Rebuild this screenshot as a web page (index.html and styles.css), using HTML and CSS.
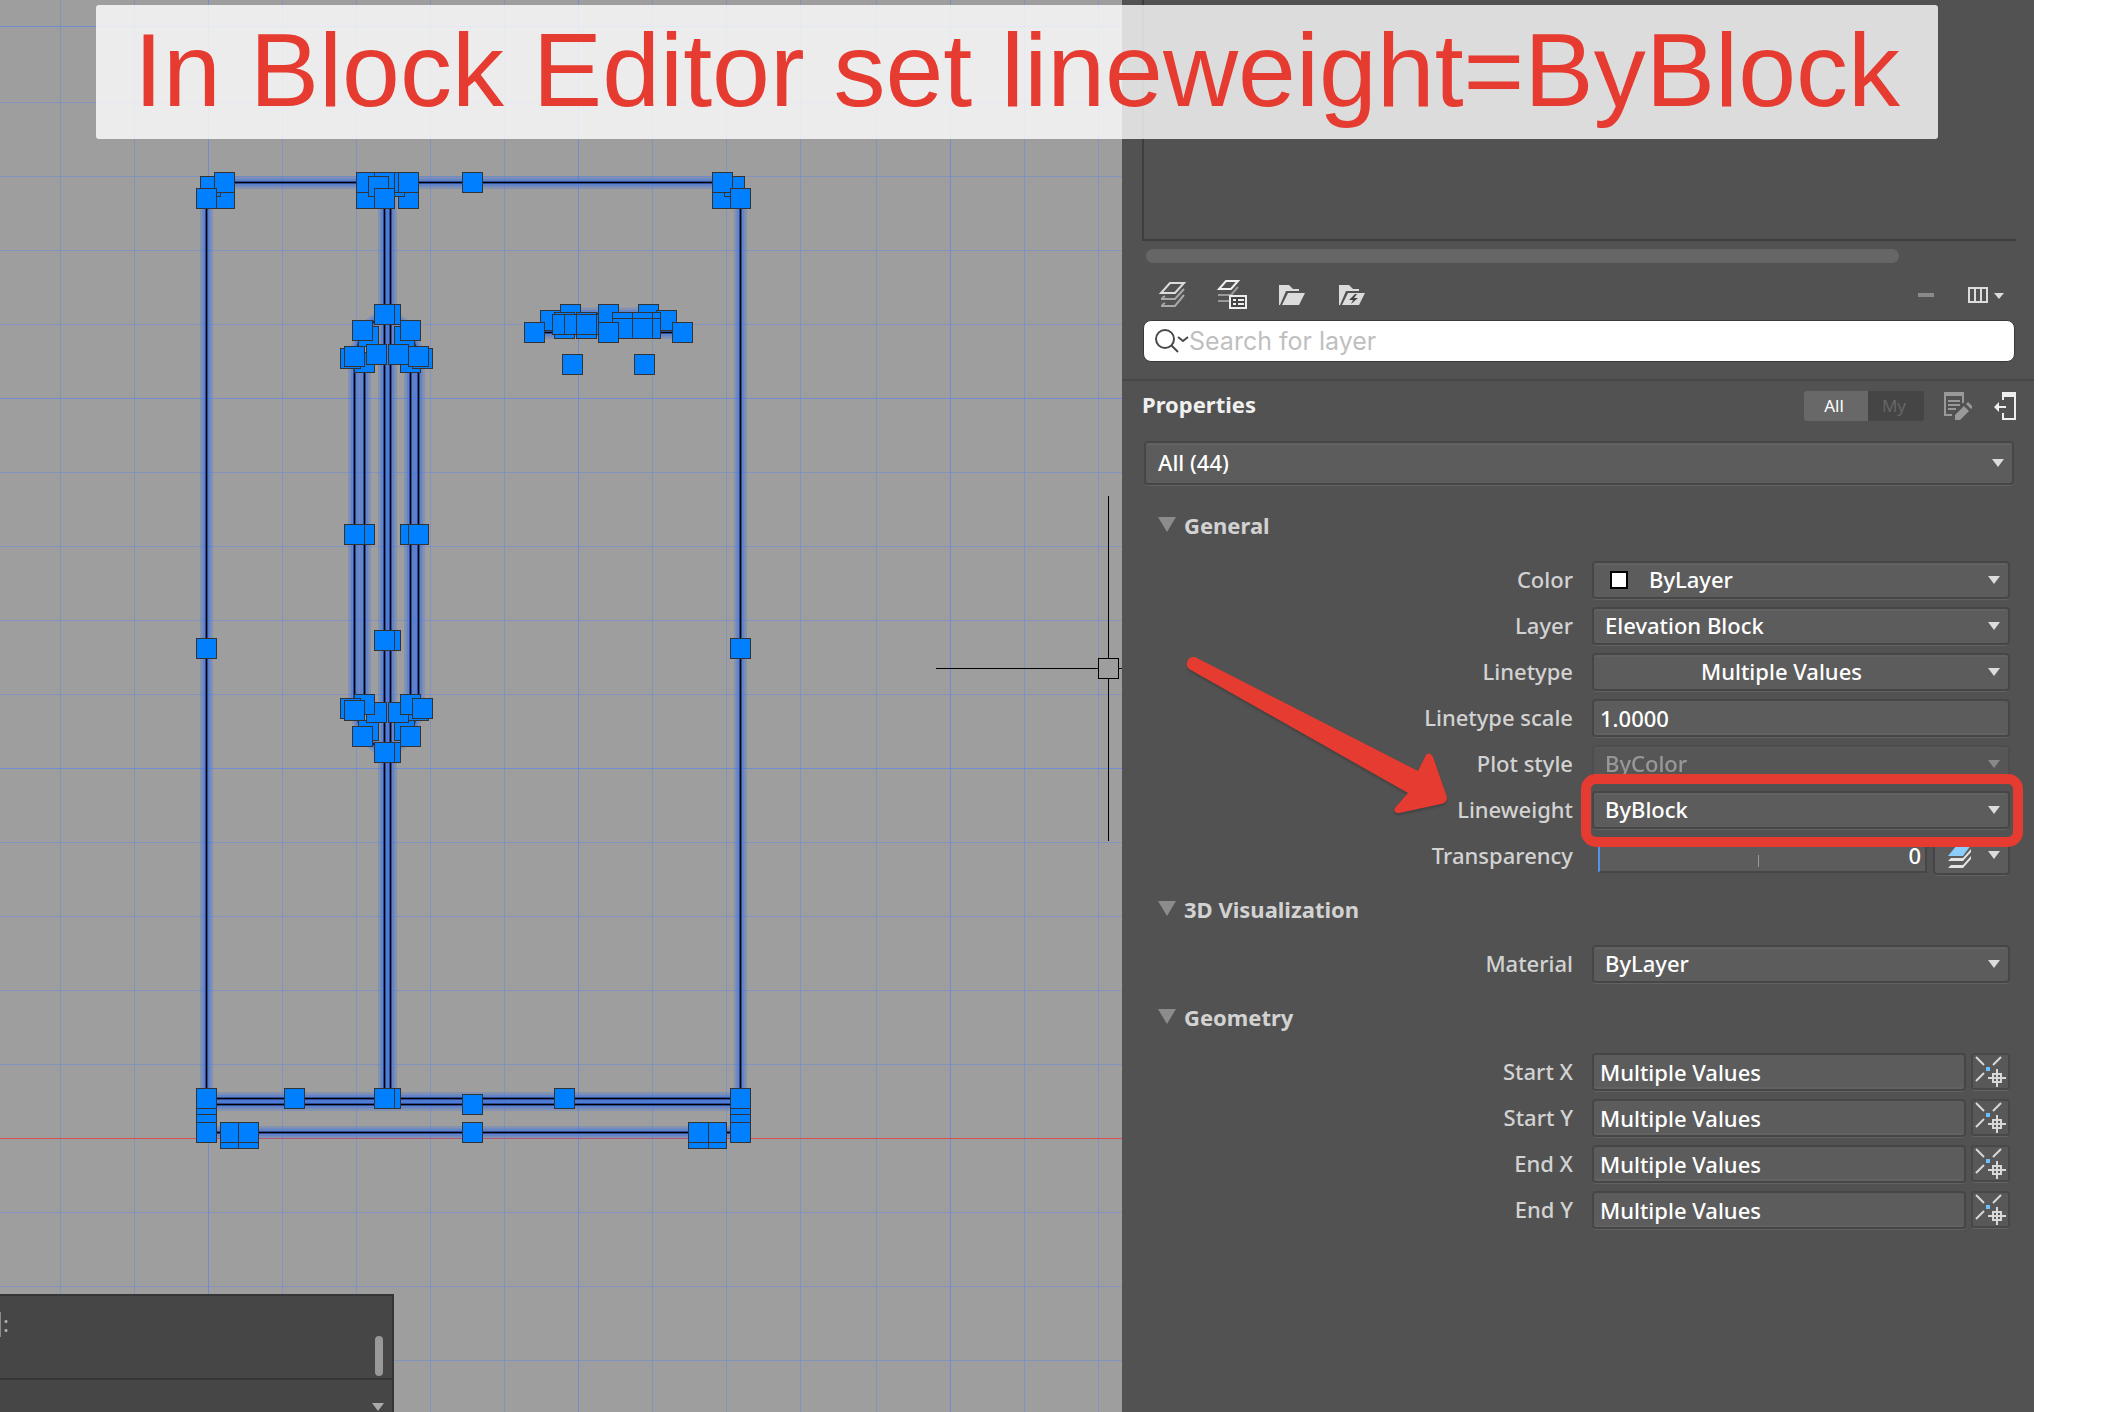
FILE: index.html
```
<!DOCTYPE html>
<html lang="en">
<head>
<meta charset="utf-8">
<title>Block Editor – Properties</title>
<link rel="stylesheet" href="styles.css">
</head>
<body>
<svg class="defs" aria-hidden="true">
  <symbol id="pick" viewBox="0 0 32 32">
    <path d="M1 1l8 8M26 1l-8 8M1 25l8-8" stroke="#d8d8d8" stroke-width="2" fill="none"/>
    <rect x="11" y="11" width="4" height="4" fill="#6cc0ff"/>
    <path d="M22 13v18M13 22h18M18 18h8v8h-8z" stroke="#d8d8d8" stroke-width="2" fill="none"/>
  </symbol>
</svg>

<main class="app">
  <section class="canvas" aria-label="Drawing area">
    <svg class="drawing" id="drawing" aria-hidden="true"></svg>
    <div class="command">
      <div class="history"><span class="prompt">:</span><span class="thumb"></span></div>
      <div class="entry"><span class="caret"></span></div>
    </div>
  </section>

  <aside class="panel">
    <div class="layer-list"></div>
    <div class="hscroll"></div>

    <div class="toolbar">
      <button class="tool" aria-label="Layers"><svg width="32" height="32" viewBox="0 0 32 32" fill="none" stroke-width="2">
        <path d="M14 4h14l-9 10H5z" stroke="#dcdcdc"/>
        <path d="M5 20h14l9-10M5 27h14l9-11M6 19l3-2M6 26l3-2" stroke="#a8a8a8"/></svg></button>
      <button class="tool" aria-label="Layer states"><svg width="32" height="32" viewBox="0 0 32 32" fill="none" stroke-width="2">
        <path d="M10 2h12l-7 8H3z" stroke="#f0f0f0"/>
        <path d="M2 16h13l7-8M2 22h12" stroke="#999"/>
        <path d="M14 17h16v12H14z" stroke="#eee" fill="#444"/><path d="M17 21h3M22 21h6M17 25h3M22 25h6" stroke="#eee"/></svg></button>
      <button class="tool" aria-label="New group"><svg width="32" height="32" viewBox="0 0 32 32">
        <path d="M3 6h10l4 4h6v2H10L4 26H3z" fill="#dcdcdc"/><path d="M12 14h17l-6 12H6z" fill="#dcdcdc"/></svg></button>
      <button class="tool" aria-label="New dynamic group"><svg width="32" height="32" viewBox="0 0 32 32">
        <path d="M3 6h10l4 4h6v2H10L4 26H3z" fill="#dcdcdc"/><path d="M12 14h17l-6 12H6z" fill="#dcdcdc"/><path d="M19 15l-6 6h4l-2 4 7-6h-4l3-4z" fill="#444"/></svg></button>
      <span class="spacer"></span>
      <button class="tool minus" aria-label="Remove"><svg width="16" height="4"><rect width="16" height="4" fill="#8a8a8a"/></svg></button>
      <button class="tool columns" aria-label="Columns"><svg width="36" height="16" viewBox="0 0 36 16">
        <path d="M1 1h18v14H1zM7 1v14M13 1v14" fill="none" stroke="#dcdcdc" stroke-width="2"/><path d="M26 6h10l-5 6z" fill="#dcdcdc"/></svg></button>
    </div>

    <label class="search">
      <svg width="34" height="26" viewBox="0 0 34 26" fill="none" stroke="#4a4a4a" stroke-width="2" aria-hidden="true">
        <circle cx="10" cy="11" r="9"/><path d="M16 17l7 7"/><path d="M23 9l5 4 5-4"/></svg>
      <input type="search" placeholder="Search for layer" aria-label="Search for layer">
    </label>

    <header class="heading">
      <h1>Properties</h1>
      <div class="segments"><button class="on">All</button><button disabled>My</button></div>
      <button class="tool" aria-label="Edit list"><svg width="28" height="28" viewBox="0 0 28 28">
        <path d="M1 2h18v9M1 2v21h7" fill="none" stroke="#999" stroke-width="2"/><path d="M0 0h20v4H0zM4 8h12v2H4zM4 12h12v2H4zM4 16h8v2H4z" fill="#999"/>
        <path d="M20 14l5 5-9 9h-5v-5zM22 12l2-2 5 5-2 2z" fill="#999"/></svg></button>
      <button class="tool" aria-label="Dock panel"><svg width="22" height="28" viewBox="0 0 22 28">
        <path d="M9 8V2h12v25H9v-6" fill="none" stroke="#eee" stroke-width="2"/><path d="M8 0h14v5H8z" fill="#eee"/><path d="M0 15l5-5v4h7v2H5v4z" fill="#eee"/></svg></button>
    </header>

    <div class="selection"><select class="field" aria-label="Selection"><option>All (44)</option></select></div>

    <section>
      <h2>General</h2>
      <div class="row"><label for="color">Color</label><div class="swatched"><select class="field" id="color"><option>ByLayer</option></select><span class="swatch"></span></div></div>
      <div class="row"><label for="layer">Layer</label><select class="field" id="layer"><option>Elevation Block</option></select></div>
      <div class="row"><label for="linetype">Linetype</label><select class="field centered" id="linetype"><option>Multiple Values</option></select></div>
      <div class="row"><label for="scale">Linetype scale</label><input class="field" id="scale" value="1.0000"></div>
      <div class="row"><label for="plot">Plot style</label><select class="field" id="plot" disabled><option>ByColor</option></select></div>
      <div class="row marked"><label for="weight">Lineweight</label><select class="field" id="weight"><option>ByBlock</option></select>
        <svg class="arrow" width="264" height="164" viewBox="0 0 264 164" aria-hidden="true"><path d="M3 8Q4 1 11 2L234 116 242 100Q246 96 249 102L263 142Q263 148 257 149L215 158Q209 158 211 153L224 138 5 14Q2 11 3 8z"/></svg>
      </div>
      <div class="row"><label for="transparency">Transparency</label>
        <div class="split"><div class="slider"><input id="transparency" value="0"><span class="tick"></span></div>
          <button class="field bylayer" aria-label="Transparency source"><svg width="24" height="28" viewBox="0 0 24 28">
            <path d="M9 4h14l-8 11H0z" fill="#8ccdfb"/><path d="M0 20l3-3h12l8-9v3l-8 9zM0 27l3-3h12l8-9v3l-8 9z" fill="#e4e4e4"/></svg></button></div></div>
    </section>

    <section>
      <h2>3D Visualization</h2>
      <div class="row"><label for="material">Material</label><select class="field" id="material"><option>ByLayer</option></select></div>
    </section>

    <section>
      <h2>Geometry</h2>
      <div class="row"><label for="sx">Start X</label><div class="point"><input class="field" id="sx" value="Multiple Values"><button class="pick" aria-label="Pick start X"><svg width="32" height="32"><use href="#pick"/></svg></button></div></div>
      <div class="row"><label for="sy">Start Y</label><div class="point"><input class="field" id="sy" value="Multiple Values"><button class="pick" aria-label="Pick start Y"><svg width="32" height="32"><use href="#pick"/></svg></button></div></div>
      <div class="row"><label for="ex">End X</label><div class="point"><input class="field" id="ex" value="Multiple Values"><button class="pick" aria-label="Pick end X"><svg width="32" height="32"><use href="#pick"/></svg></button></div></div>
      <div class="row"><label for="ey">End Y</label><div class="point"><input class="field" id="ey" value="Multiple Values"><button class="pick" aria-label="Pick end Y"><svg width="32" height="32"><use href="#pick"/></svg></button></div></div>
    </section>
  </aside>

  <p class="banner">In Block Editor set lineweight=ByBlock</p>
</main>
<script src="script.js"></script>
</body>
</html>
```
FILE: styles.css
```
* { box-sizing: border-box; }
body {
  margin: 0;
  background: #fff;
  font-family: "Noto Sans", "Open Sans", sans-serif;
  font-size: 22px;
  color: #fff;
}
button, input, select { font: inherit; color: inherit; }
button { padding: 0; border: 0; background: none; }
svg { display: block; }
.defs { position: absolute; width: 0; height: 0; }

.app {
  position: relative;
  display: grid;
  grid-template-columns: minmax(0, 1fr) 912px;
  min-height: 100vh;
  padding-right: 78px;
}

/* Drawing area */
.canvas {
  position: relative;
  display: flex;
  flex-direction: column;
  justify-content: flex-end;
  overflow: hidden;
  background: #9e9e9e;
}
.drawing { position: absolute; inset: 0; width: 100%; height: 100%; }
.grid { stroke: #5b82e6; stroke-opacity: .4; }
.grid.major { stroke-opacity: .65; }
.axis { stroke: #d9504e; }
.glow-a { stroke: #3f74e4; stroke-opacity: .28; stroke-width: 13; fill: none; }
.glow-b { stroke: #3f74e4; stroke-opacity: .45; stroke-width: 8; fill: none; }
.glow-c { stroke: #16357e; stroke-opacity: .7; stroke-width: 3; fill: none; }
.line { stroke: #000; stroke-width: 1; fill: none; }
.grip { fill: #0080ff; stroke: #333; }

.command {
  position: relative;
  width: 394px;
  background: #464646;
  border: 2px solid #353535;
  border-width: 2px 2px 0 0;
}
.history {
  display: flex;
  justify-content: space-between;
  height: 84px;
  padding: 16px 9px 0 0;
  border-bottom: 2px solid #353535;
}
.prompt {
  height: 25px;
  padding-left: 2px;
  border-left: 1px solid #8a8a8a;
  line-height: 23px;
  color: #b0b0b0;
}
.thumb { width: 8px; height: 40px; margin-top: 24px; border-radius: 4px; background: #999; }
.entry { display: flex; justify-content: flex-end; height: 32px; padding: 23px 8px 0 0; }
.caret { width: 12px; height: 8px; background: #aaa; clip-path: polygon(0 0, 100% 0, 50% 100%); }

/* Panel */
.panel { background: #525252; }
.layer-list {
  height: 241px;
  margin: 0 18px 0 20px;
  border-left: 2px solid #3e3e3e;
  border-bottom: 2px solid #3e3e3e;
}
.hscroll { height: 14px; margin: 8px 135px 0 24px; border-radius: 7px; background: #666; }
.toolbar {
  display: flex;
  align-items: center;
  gap: 28px;
  height: 56px;
  padding: 8px 30px 0 34px;
}
.spacer { flex: 1; }
.columns { margin-left: 6px; }
.search {
  display: flex;
  align-items: center;
  height: 42px;
  margin: 1px 19px 0 21px;
  padding: 0 11px;
  border: 1px solid #3a3a3a;
  border-radius: 8px;
  background: #fff;
}
.search input {
  flex: 1;
  padding: 0;
  border: 0;
  outline: 0;
  background: none;
  color: #333;
  font: 25px/38px Inter, sans-serif;
}
.search input::placeholder { color: #bfbfbf; opacity: 1; }

.heading {
  display: flex;
  align-items: center;
  height: 60px;
  margin-top: 17px;
  padding: 0 18px 12px 20px;
  border-top: 2px solid #474747;
}
.heading h1 { flex: 1; margin: 0; font-size: 22px; font-weight: 700; line-height: 30px; color: #f0f0f0; }
.segments { display: flex; margin-top: 4px; margin-right: 20px; border-radius: 3px; overflow: hidden; font-size: 17px; }
.segments button { width: 56px; height: 30px; padding: 0 4px 2px 0; background: #454545; color: #666; }
.segments .on { width: 64px; background: #686868; color: #fff; }
.heading .tool { margin-top: 4px; }
.heading .tool + .tool { margin-left: 22px; }

.selection { padding: 0 20px 0 22px; margin-top: 2px; }
.selection .field { height: 44px; padding-left: 12px; }

.field {
  width: 100%;
  height: 38px;
  padding: 0 8px 3px 11px;
  border: 2px solid #464646;
  border-radius: 4px;
  outline: 0;
  font-weight: 500;
  box-shadow: 0 2px 0 -1px #626262, inset 0 2px 0 #626262;
  appearance: none;
  background: #5c5c5c;
}
select.field {
  background-image: url("data:image/svg+xml,%3Csvg xmlns='http://www.w3.org/2000/svg' width='12' height='8'%3E%3Cpath d='M0 0h12l-6 8z' fill='%23dcdcdc'/%3E%3C/svg%3E");
  background-repeat: no-repeat;
  background-position: right 8px center;
}
input.field { padding: 0 6px; box-shadow: 0 2px 0 -1px #626262, inset 0 -2px 0 #626262; }
select:disabled { opacity: .4; }
.centered { padding-right: 50px; text-align: center; text-align-last: center; }

section > h2 {
  display: flex;
  align-items: center;
  gap: 8px;
  height: 62px;
  margin: 0;
  padding: 0 0 3px 36px;
  font-size: 22px;
  font-weight: 700;
  color: #d2d2d2;
}
h2::before {
  content: "";
  width: 18px;
  height: 15px;
  background: #8c8c8c;
  clip-path: polygon(0 0, 100% 0, 50% 100%);
}
.selection + section > h2 { margin-top: 10px; }

.row {
  display: grid;
  grid-template-columns: minmax(0, 1fr) 418px;
  column-gap: 19px;
  align-items: center;
  height: 46px;
  padding: 0 24px 0 20px;
}
.row > label { padding-bottom: 3px; text-align: right; font-weight: 500; color: #d2d2d2; }
.swatched { position: relative; }
.swatched .field { padding-left: 55px; }
.swatch {
  position: absolute;
  left: 18px;
  top: 10px;
  width: 18px;
  height: 18px;
  border: 2px solid #000;
  background: #fff;
}
.point { display: grid; grid-template-columns: minmax(0, 1fr) 39px; column-gap: 5px; }
.pick {
  height: 37px;
  padding: 1px 0 0 4px;
  border-radius: 3px;
  background: #585858;
  box-shadow: inset 0 0 0 2px #484848, 0 2px 0 -1px #646464;
}

.split { display: flex; gap: 6px; padding-left: 6px; }
.slider { position: relative; flex: 1; }
.slider input {
  width: 100%;
  height: 36px;
  padding: 0 4px;
  border: 2px solid #464646;
  border-left: 2px solid #5591e8;
  outline: 0;
  background: #5c5c5c;
  text-align: right;
  font-weight: 500;
}
.tick { position: absolute; left: 160px; bottom: 8px; width: 1px; height: 12px; background: #999; }
.bylayer {
  display: flex;
  align-items: center;
  width: 77px;
  padding: 0 8px 2px 13px;
  justify-content: space-between;
}
.bylayer::after {
  content: "";
  width: 12px;
  height: 8px;
  background: #dcdcdc;
  clip-path: polygon(0 0, 100% 0, 50% 100%);
}

/* Call-outs drawn over the panel */
.marked { position: relative; z-index: 1; }
.marked::after {
  content: "";
  position: absolute;
  inset: -13px 11px -14px 459px;
  border: 10px solid #e53b30;
  border-radius: 15px;
  pointer-events: none;
}
.arrow { position: absolute; left: 62px; top: -132px; fill: #e53b30; filter: drop-shadow(0 2px 1px #3338); }
.banner {
  position: absolute;
  left: 96px;
  right: 174px;
  top: 5px;
  z-index: 2;
  height: 134px;
  margin: 0;
  border-radius: 3px;
  background: rgba(255, 255, 255, .8);
  color: #e53b30;
  font: 104px/130px "Liberation Sans", Arial, sans-serif;
  text-align: center;
  white-space: nowrap;
}
```
FILE: script.js
```
// Draws the grid, the selected lines and their grips.
const svg = document.getElementById('drawing');
const NS = 'http://www.w3.org/2000/svg';

function add(tag, cls, attrs) {
  const el = document.createElementNS(NS, tag);
  el.setAttribute('class', cls);
  for (const key in attrs) el.setAttribute(key, attrs[key]);
  svg.appendChild(el);
}

const columns = [60, 134, 208, 282, 356, 430, 504, 578, 652, 726, 800, 876, 950, 1024, 1098];
const rows = [26, 102, 176, 250, 324, 398, 472, 546, 620, 694, 768, 842, 916, 990, 1064, 1212, 1286, 1360];
const major = [208, 578, 950, 26, 398, 768];
const gridClass = v => major.includes(v) ? 'grid major' : 'grid';
columns.forEach(v => add('line', gridClass(v), { x1: v + .5, x2: v + .5, y1: 0, y2: '100%' }));
rows.forEach(v => add('line', gridClass(v), { x1: 0, x2: '100%', y1: v + .5, y2: v + .5 }));
add('line', 'axis', { x1: 0, x2: '100%', y1: 1138.5, y2: 1138.5 });

const paths = [
  'M206.5 198V1132', 'M740.5 198V1132', 'M384.5 182V1098', 'M390.5 182V1098',
  'M224 182.5H722', 'M206 1098.5H740', 'M206 1104.5H740', 'M206 1132.5H740',
  'M354.5 357V708', 'M364.5 362V704', 'M410.5 362V704', 'M418.5 357V708',
  'M354.5 357L363 330 384 314M418.5 357L410 330 390 314',
  'M354.5 708L363 736 384 752M418.5 708L410 736 390 752',
  'M534 332.5H682M550 320L570 314H648L666 320'
];
['glow-a', 'glow-b', 'glow-c', 'line'].forEach(cls => paths.forEach(d => add('path', cls, { d })));

const grips = [
  [224, 198], [210, 186], [224, 182], [206, 198],
  [366, 198], [408, 198], [394, 186], [366, 182], [390, 182], [408, 182], [384, 182], [378, 186], [384, 198],
  [472, 182], [722, 198], [734, 186], [722, 182], [740, 198],
  [390, 314], [384, 314], [368, 336], [404, 336], [362, 330], [410, 330],
  [364, 362], [410, 362], [350, 358], [422, 358], [354, 356], [418, 356], [376, 354], [398, 354],
  [364, 534], [354, 534], [410, 534], [418, 534], [390, 640], [384, 640], [206, 648], [740, 648],
  [368, 730], [404, 730], [376, 712], [398, 712], [418, 710], [364, 704], [410, 704], [350, 708], [354, 710], [422, 708],
  [362, 736], [410, 736], [390, 752], [384, 752],
  [550, 320], [570, 314], [608, 314], [648, 314], [666, 320],
  [564, 322], [586, 322], [564, 328], [586, 328], [562, 324], [588, 324], [574, 324], [586, 324],
  [622, 322], [650, 322], [642, 322], [622, 328], [650, 328], [642, 328],
  [534, 332], [682, 332], [608, 332], [572, 364], [644, 364],
  [206, 1114], [206, 1104], [206, 1098], [206, 1132], [740, 1114], [740, 1104], [740, 1098], [740, 1132],
  [230, 1138], [248, 1138], [230, 1132], [248, 1132], [716, 1138], [698, 1138], [716, 1132], [698, 1132],
  [294, 1098], [390, 1098], [384, 1098], [472, 1104], [472, 1132], [564, 1098]
];
grips.forEach(([x, y]) => add('rect', 'grip', { x: x - 9.5, y: y - 9.5, width: 20, height: 20 }));

// Crosshair cursor
add('path', 'line', { d: 'M936 668.5H1098M1118 668.5H1122M1108.5 496V658M1108.5 678V841' });
add('rect', 'line', { x: 1098.5, y: 658.5, width: 20, height: 20 });
```
